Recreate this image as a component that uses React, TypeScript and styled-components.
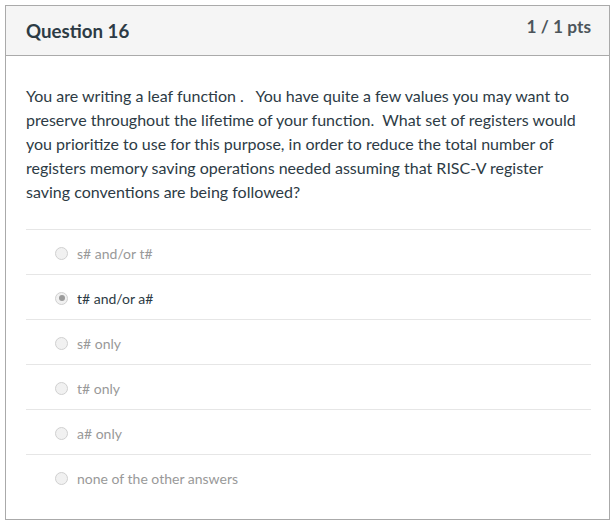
import React from "react";
import styled, { createGlobalStyle } from "styled-components";

const Global = createGlobalStyle`
  body { margin: 0; background: #fff; font-family: Lato, "Open Sans", sans-serif; }
`;

const Page = styled.div`
  padding: 5px 5px 1px 5px;
`;

const Card = styled.div`
  width: 605px;
  height: 515px;
  box-sizing: border-box;
  border: 1px solid #aaaaaa;
  background: #fff;
`;

const Header = styled.div`
  height: 50px;
  box-sizing: border-box;
  background: #f5f5f5;
  border-bottom: 1px solid #aaaaaa;
  display: flex;
  justify-content: space-between;
  padding: 0 18px 0 20px;
`;

const Title = styled.div`
  font-size: 18.7px;
  font-weight: 700;
  color: #2d3b45;
  margin-top: 14px;
`;

const Points = styled.div`
  font-size: 17.3px;
  font-weight: 700;
  color: #4d555b;
  margin-top: 10px;
`;

const Body = styled.div`
  padding: 28px 18px 0 20px;
`;

const Prompt = styled.p`
  margin: 0 0 25px 0;
  max-width: 556px;
  font-size: 16px;
  line-height: 24px;
  color: #2d3b45;
`;

const Answers = styled.div`
  display: flex;
  flex-direction: column;
`;

const Row = styled.label`
  display: flex;
  align-items: center;
  height: 45px;
  box-sizing: border-box;
  border-top: 1px solid #e6e6e6;
  padding-left: 29px;
  padding-top: 2px;
`;

const Radio = styled.span<{ $checked?: boolean }>`
  width: 13px;
  height: 13px;
  box-sizing: border-box;
  border-radius: 50%;
  border: 1px solid #d0d0d0;
  background: #f1f1f1;
  display: flex;
  align-items: center;
  justify-content: center;
  margin-right: 9px;
  &::after {
    content: "";
    display: ${(p) => (p.$checked ? "block" : "none")};
    width: 6px;
    height: 6px;
    border-radius: 50%;
    background: #9b9b9b;
  }
`;

const AnswerText = styled.span<{ $checked?: boolean }>`
  font-size: 14px;
  color: ${(p) => (p.$checked ? "#2d3b45" : "#999999")};
`;

const answers = [
  { text: "s# and/or t#", checked: false },
  { text: "t# and/or a#", checked: true },
  { text: "s# only", checked: false },
  { text: "t# only", checked: false },
  { text: "a# only", checked: false },
  { text: "none of the other answers", checked: false },
];

export default function App() {
  return (
    <Page>
      <Global />
      <Card>
        <Header>
          <Title>Question 16</Title>
          <Points>1 / 1 pts</Points>
        </Header>
        <Body>
          <Prompt>
            You are writing a leaf function .&nbsp;&nbsp; You have quite a few values you may want to
            preserve throughout the lifetime of your function.&nbsp; What set of registers would
            you prioritize to use for this purpose, in order to reduce the total number of
            registers memory saving operations needed assuming that RISC-V register
            saving conventions are being followed?
          </Prompt>
          <Answers>
            {answers.map((a) => (
              <Row key={a.text}>
                <Radio $checked={a.checked} />
                <AnswerText $checked={a.checked}>{a.text}</AnswerText>
              </Row>
            ))}
          </Answers>
        </Body>
      </Card>
    </Page>
  );
}
